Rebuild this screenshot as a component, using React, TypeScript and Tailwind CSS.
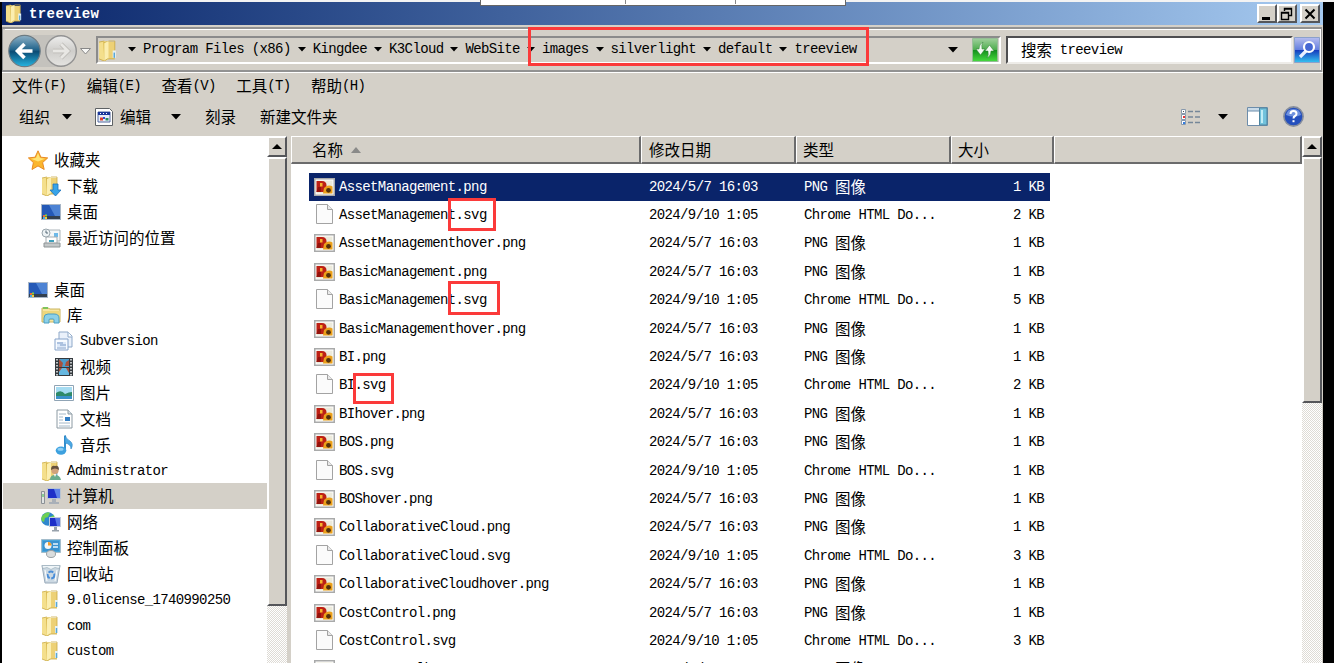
import type { ReactNode } from "react";

const places = [
  { icon: "star", label: "收藏夹", level: 0 },
  { icon: "download", label: "下载", level: 1 },
  { icon: "desktop", label: "桌面", level: 1 },
  { icon: "recent", label: "最近访问的位置", level: 1 },
  { icon: "", label: "", level: 0 },
  { icon: "desktop", label: "桌面", level: 0 },
  { icon: "library", label: "库", level: 1 },
  { icon: "subversion", label: "Subversion", level: 2 },
  { icon: "video", label: "视频", level: 2 },
  { icon: "picture", label: "图片", level: 2 },
  { icon: "document", label: "文档", level: 2 },
  { icon: "music", label: "音乐", level: 2 },
  { icon: "user", label: "Administrator", level: 1 },
  { icon: "computer", label: "计算机", level: 1, active: true },
  { icon: "network", label: "网络", level: 1 },
  { icon: "control", label: "控制面板", level: 1 },
  { icon: "recycle", label: "回收站", level: 1 },
  { icon: "folder", label: "9.0license_1740990250", level: 1 },
  { icon: "folder", label: "com", level: 1 },
  { icon: "folder", label: "custom", level: 1 },
];

const files = [
  { name: "AssetManagement.png", size: 1 },
  { name: "AssetManagement.svg", size: 2 },
  { name: "AssetManagementhover.png", size: 1 },
  { name: "BasicManagement.png", size: 1 },
  { name: "BasicManagement.svg", size: 5 },
  { name: "BasicManagementhover.png", size: 1 },
  { name: "BI.png", size: 1 },
  { name: "BI.svg", size: 2 },
  { name: "BIhover.png", size: 1 },
  { name: "BOS.png", size: 1 },
  { name: "BOS.svg", size: 1 },
  { name: "BOShover.png", size: 1 },
  { name: "CollaborativeCloud.png", size: 1 },
  { name: "CollaborativeCloud.svg", size: 3 },
  { name: "CollaborativeCloudhover.png", size: 1 },
  { name: "CostControl.png", size: 1 },
  { name: "CostControl.svg", size: 3 },
  { name: "CostControlhover.png", size: 1 },
];

const crumbs = [
  "Program Files (x86)",
  "Kingdee",
  "K3Cloud",
  "WebSite",
  "images",
  "silverlight",
  "default",
  "treeview",
];

const menus = ["文件(F)", "编辑(E)", "查看(V)", "工具(T)", "帮助(H)"];

const indents = ["pl-[26px]", "pl-[39px]", "pl-[52px]"];

// Latin glyphs are exactly half as wide as the CJK ones
function Txt({ children }: { children: string }) {
  const parts = children.split(/([\u4e00-\u9fff]+)/).filter(Boolean);
  return (
    <span className="flex items-center whitespace-pre">
      {parts.map((part, i) =>
        /[\u4e00-\u9fff]/.test(part) ? (
          <span
            key={i}
            className="-translate-y-px font-['Noto_Sans_CJK_SC',sans-serif] text-[15.5px] leading-[20px]"
          >
            {part}
          </span>
        ) : (
          <span
            key={i}
            className="font-['Liberation_Mono',monospace] text-[14px] leading-[20px] tracking-[-0.63px]"
          >
            {part}
          </span>
        ),
      )}
    </span>
  );
}

function Folder() {
  return (
    <>
      <path d="M1 2l5-1 3 1v17l-3 1-5-2z" fill="#f4df8c" />
      <path d="M5 2l5-1v17l-4 2z" fill="#d9b94f" />
      <path d="M8 2h8v16H9z" fill="#edd176" />
      <path d="M6 3l4-2v17l-4 2z" fill="#fbeeb0" />
      <path d="M1 2l5-1M10 1h6v9M16 18H9l-3 2-5-2" fill="none" stroke="#c9a945" strokeWidth=".8" />
      <path d="M14 10h3v7h-3z" fill="#e7f1f3" />
      <path d="M15.5 12v5" stroke="#58a7d5" strokeWidth="1.4" />
    </>
  );
}

const drawings: Record<string, ReactNode> = {
  folder: <Folder />,
  star: (
    <>
      <path d="M10 .8l2.9 6.4 6.8.7-5.1 4.7 1.6 6.9L10 15.9l-6 3.6 1.4-6.9L.4 7.9l6.7-.7z" fill="#fbb62d" stroke="#e88a24" />
      <path d="M10 3l2 5 5 .8-7 2.7-7-2.7 5-.8z" fill="#ffe475" />
    </>
  ),
  download: (
    <>
      <Folder />
      <path d="M12 8h5v6h3l-5.5 6L9 14h3z" fill="#38a4e8" stroke="#1c72bb" strokeWidth=".8" />
    </>
  ),
  desktop: (
    <>
      <path d="M0 2h20v16H0z" fill="#a8b6c6" />
      <path d="M1 3h18v11H1z" fill="#2459b7" />
      <path d="M8 3h11v11H14z" fill="#4d83d4" />
      <path d="M1 14h18v3H1z" fill="#33404f" />
      <path d="M2 13h2v2H2z" fill="#ed6b38" />
      <path d="M4 12.5h2v2H4z" fill="#8bce3b" />
      <path d="M2 15h2v2H2z" fill="#3fabe8" />
      <path d="M4 15h2v2H4z" fill="#f7cb39" />
    </>
  ),
  recent: (
    <>
      <path d="M7 2h12v11H7z" fill="#f4f7f8" stroke="#acb5ba" />
      <path d="M13 5h4v4h-4z" fill="#6db9e9" />
      <path d="M5 9h11v7H5z" fill="#fff" stroke="#a6adb1" />
      <path d="M8 12h5v2H8z" fill="#3fa0bc" />
      <path d="M3 15h16v4H3z" fill="#c3c7c8" stroke="#8d9496" />
      <circle cx="5" cy="5" r="4" fill="#edf2f4" stroke="#99a5ac" />
      <path d="M5 2.5V5h2" fill="none" stroke="#536774" />
    </>
  ),
  library: (
    <>
      <path d="M1 3h6l2 1h10v13H1z" fill="#f7e6a1" stroke="#cbb45e" />
      <path d="M2 2h5v2H2z" fill="#7fc45c" />
      <path d="M2 6h17v9H2z" fill="#edd77c" />
      <path d="M3 18v-5q0-4 4-4h6q5 0 5 4v5h-5v-3q0-1-1-1H9q-1 0-1 1v3z" fill="#8bd0e8" stroke="#4b9fc4" />
    </>
  ),
  subversion: (
    <>
      <path d="M5 1h9l4 4v11H5z" fill="#eaf1fb" stroke="#8fa9c9" />
      <path d="M14 1v5h4" fill="#fff" stroke="#8fa9c9" />
      <path d="M1 8h13v11H1z" fill="#f8fbff" stroke="#86a3ca" />
      <path d="M3 11h9v5H3z" fill="#dce8f8" />
      <path d="M3 12h6M6 14h6M3 17h9" stroke="#7d9bc7" />
    </>
  ),
  video: (
    <>
      <path d="M1 1h18v18H1z" fill="#34393d" />
      <path d="M5 2h10v8H5z" fill="#4d9bc9" />
      <path d="M5 11h10v7H5z" fill="#65b7e0" />
      <path d="M5 2l4 4-1 4H5zM15 3v6h-4l1-4zM5 11h3l-3 4zM15 11h-3l3 5z" fill="#a8503c" />
      <path d="M3 2v17M17 2v17" stroke="#e4e8ea" strokeWidth="1.6" strokeDasharray="1.6 1.4" />
    </>
  ),
  picture: (
    <>
      <path d="M.5 2.5h19v15H.5z" fill="#fff" stroke="#90a4b5" />
      <path d="M2 4h16v12H2z" fill="#a6dcf2" />
      <path d="M2 10q5-4 9 1 4-2 7-2v4H2z" fill="#2f8a69" />
      <path d="M2 13h16v3H2z" fill="#3a91c9" />
    </>
  ),
  document: (
    <>
      <path d="M3 1h11l4 4v14H3z" fill="#fff" stroke="#8c9aa3" />
      <path d="M14 1v4h4" fill="#d8e1e7" stroke="#8c9aa3" />
      <path d="M5 5h7M5 8h4M5 11h4M5 14h11M5 17h11" stroke="#a4b8c8" />
      <path d="M11 8h5v4h-5z" fill="#347fc4" />
    </>
  ),
  music: (
    <>
      <path d="M11 1v14" stroke="#338fce" strokeWidth="2" />
      <path d="M11 0q1 4 5 6 4 3 1 8 0-5-6-6z" fill="#4ba9e4" stroke="#2c83c2" strokeWidth=".6" />
      <ellipse cx="7" cy="15.6" rx="5.3" ry="4.2" fill="#3da1df" />
      <ellipse cx="6.5" cy="14.3" rx="3" ry="1.5" fill="#8fd0f4" />
    </>
  ),
  user: (
    <>
      <Folder />
      <path d="M9 19q0-5 5-5t6 5z" fill="#69ad8d" />
      <circle cx="14" cy="9.5" r="3.6" fill="#cfa27b" />
      <path d="M10 9q0-5 4-4 4-1 4 4-4-3-8 0z" fill="#65503e" />
      <path d="M12.5 13l1.5 3 1.5-3z" fill="#f4efe8" />
    </>
  ),
  computer: (
    <>
      <path d="M6 2h14v11H6z" fill="#b8c4d2" />
      <path d="M7 3h12v9H7z" fill="#1d2fc8" />
      <path d="M13 3h6v9h-3z" fill="#5d82e8" />
      <path d="M11 13h4v3h-4zM8 16h10v2H8z" fill="#a9b0b8" />
      <path d="M.5 5.5h3v12h-3z" fill="#e0e3e3" stroke="#8b9196" />
      <path d="M2 8v3" stroke="#37b944" />
    </>
  ),
  network: (
    <>
      <circle cx="7" cy="7" r="6.8" fill="#2f87cd" />
      <path d="M2 3q4-4 7-2l-2 4-3 1-1 4-2-1q-2-3 1-6zM9 5l4-2 1 4-4 2z" fill="#6dd052" />
      <path d="M8 5h12v10H8z" fill="#c1cbdb" />
      <path d="M9 6h10v8H9z" fill="#1d2fc8" />
      <path d="M14 6h5v8h-3z" fill="#5877e6" />
      <path d="M13 15h3v3h-3zM11 18h7v1.5h-7z" fill="#98a2ac" />
    </>
  ),
  control: (
    <>
      <path d="M.5 1.5h19v13H.5z" fill="#4ba6da" stroke="#a3bccb" />
      <path d="M2 3h16v10H2z" fill="#3b93cf" />
      <circle cx="7" cy="7.5" r="3.5" fill="#f5f7f7" />
      <path d="M7 7.5V4a3.5 3.5 0 013.5 3.5z" fill="#f49b29" />
      <path d="M12 6h5M12 9h5" stroke="#e7f6ff" strokeWidth="1.5" />
      <ellipse cx="10" cy="16" rx="4.5" ry="3.5" fill="#dadddd" stroke="#9aa1a5" />
    </>
  ),
  recycle: (
    <>
      <path d="M1 1.5h18L16 19H4z" fill="#cbd8e2" stroke="#9aabba" />
      <path d="M1 1.5h18l-1 3-4-1-4 2-4-2-4 1z" fill="#eff5f8" stroke="#9fb1bd" strokeWidth=".7" />
      <circle cx="10" cy="11" r="3.4" fill="none" stroke="#4a8ed9" strokeWidth="2" strokeDasharray="5 1.5" />
      <path d="M4 6l2 11M16 6l-2 11" stroke="#fff" />
    </>
  ),
};

function Icon({ name, className = "h-5 w-5" }: { name: string; className?: string }) {
  return (
    <svg viewBox="0 0 20 20" className={`${className} shrink-0`} aria-hidden="true">
      {drawings[name]}
    </svg>
  );
}

function FileIcon({ png }: { png: boolean }) {
  if (!png) {
    return (
      <svg width="21" height="22" viewBox="0 0 21 22" className="-translate-y-px" aria-hidden="true">
        <path d="M2.5 1.5h11l5 5v14h-16z" fill="#fbfbfb" stroke="#a3a3a3" />
        <path d="M13.5 1.5v5h5" fill="#e9e9e9" stroke="#a3a3a3" />
      </svg>
    );
  }
  return (
    <svg width="21" height="18" viewBox="0 0 21 18" aria-hidden="true">
      <path d="M.75.75h19.5v16.5H.75z" fill="#fff" stroke="#a9aaaa" strokeWidth="1.5" />
      <path d="M2.5 2.5h16v13h-16z" fill="#eceadb" />
      <path d="M2.5 3H8q4.5 0 4.5 4.5T10 14H2.5z" fill="#bd2015" />
      <path d="M4 9h3v5H2.5z" fill="#94130d" />
      <path d="M6 5h2.5v3.5H6z" fill="#f6b32a" />
      <path d="M10 10q4-4 8.5-1.5v7H9z" fill="#eba01b" />
      <circle cx="14.5" cy="12.3" r="2.4" fill="#54310c" />
    </svg>
  );
}

function Down({ className = "" }: { className?: string }) {
  return (
    <svg width="10" height="6" viewBox="0 0 10 6" className={`shrink-0 ${className}`} aria-hidden="true">
      <path d="M0 0h10L5 5.5z" />
    </svg>
  );
}

function ScrollBar({ thumb }: { thumb: string }) {
  return (
    <div className="flex w-5 shrink-0 flex-col bg-[conic-gradient(#fff_25%,#dedbd5_0_50%,#fff_0_75%,#dedbd5_0)] bg-[length:2px_2px]">
      <div className="flex h-[21px] items-center justify-center border-2 border-t-white border-r-[#55565a] border-b-[#55565a] border-l-white bg-[#d4d0c8]">
        <svg width="10" height="5" viewBox="0 0 10 5" aria-hidden="true">
          <path d="M0 5h10L5 0z" />
        </svg>
      </div>
      <div
        className={`${thumb} border-2 border-t-white border-r-[#55565a] border-b-[#55565a] border-l-white bg-[#d4d0c8]`}
      />
    </div>
  );
}

function TitleBar() {
  const button =
    "flex h-[19px] w-5 items-center justify-center border-2 border-t-white border-r-[#55565a] border-b-[#55565a] border-l-white bg-[#d4d0c8]";
  return (
    <div className="flex h-[23px] shrink-0 items-center bg-linear-to-r from-[#0a246a] to-[#a6caf0] pr-[3px] pl-[3px] text-white">
      <Icon name="folder" className="h-[19px] w-[19px]" />
      <div className="ml-[5px] font-['Liberation_Mono',monospace] text-[14px] leading-[20px] font-bold tracking-[0.4px]">
        treeview
      </div>
      <div className="ml-auto flex">
        <div className={button}>
          <svg width="16" height="14" viewBox="0 0 16 14">
            <path d="M3 10h8v3H3z" />
          </svg>
        </div>
        <div className={button}>
          <svg width="16" height="14" viewBox="0 0 16 14" fill="none" stroke="#000">
            <path d="M5.5 4V1.5h7v7H10M5 2h8M2.5 5.5h7v7h-7zM2 6h8" strokeWidth="1.4" />
          </svg>
        </div>
        <div className={`${button} ml-[3px]`}>
          <svg width="14" height="14" viewBox="0 0 14 14" stroke="#000" strokeWidth="2">
            <path d="M2.5 2.5l9 9M11.5 2.5l-9 9" />
          </svg>
        </div>
      </div>
    </div>
  );
}

function NavButtons() {
  return (
    <svg width="88" height="38" viewBox="0 0 88 38" className="shrink-0" aria-hidden="true">
      <defs>
        <linearGradient id="back" x2="0" y2="1">
          <stop stopColor="#90b2c7" />
          <stop offset=".45" stopColor="#24668d" />
          <stop offset=".52" stopColor="#0b4b74" />
          <stop offset="1" stopColor="#26b6e2" />
        </linearGradient>
        <linearGradient id="forward" x2="0" y2="1">
          <stop stopColor="#eeeeed" />
          <stop offset=".5" stopColor="#cecdca" />
          <stop offset="1" stopColor="#e5e4e1" />
        </linearGradient>
      </defs>
      <path d="M21 2h36q-12 15 0 32H21q12-17 0-32z" fill="#c4c2bd" />
      <circle cx="19.5" cy="18" r="15.7" fill="url(#back)" stroke="#6d7b83" strokeWidth="1.2" />
      <circle cx="56" cy="18" r="15.3" fill="url(#forward)" stroke="#929292" strokeWidth="1.4" />
      <path d="M27.5 18h-13M19.5 11l-7 7 7 7" fill="none" stroke="#fff" strokeWidth="3.6" />
      <path d="M48 18h13M56 11l7 7-7 7" fill="none" stroke="#bbb9b5" strokeWidth="4.4" />
      <path d="M48 18h13M56 11l7 7-7 7" fill="none" stroke="#e8e7e4" strokeWidth="2.8" />
      <path d="M75.5 15.5h10l-5 5.5z" fill="#f7f7f5" stroke="#888" />
    </svg>
  );
}

function AddressBar() {
  return (
    <div className="mr-px flex h-[45px] shrink-0 border-t-2 border-r-2 border-b-2 border-l border-[#929292] pl-[2px]">
      <div className="flex grow items-center border-t border-r border-white">
        <div className="mt-[3px] flex">
          <NavButtons />
        </div>
        <div className="ml-[3px] flex h-7 w-[905px] items-center border-2 border-t-[#8b8b8b] border-r-white border-b-white border-l-[#8b8b8b]">
          <Icon name="folder" className="h-[21px] w-[21px]" />
          <div className="ml-[2px] flex -translate-y-px items-center">
            {crumbs.map((crumb) => (
              <div key={crumb} className="flex items-center">
                <span className="flex w-[22px] justify-center pt-px">
                  <svg width="8" height="5" viewBox="0 0 8 5">
                    <path d="M0 0h8L4 4.5z" />
                  </svg>
                </span>
                <Txt>{crumb}</Txt>
              </div>
            ))}
          </div>
          <Down className="mr-[14px] ml-auto" />
          <svg width="27" height="24" viewBox="0 0 27 24" className="shrink-0">
            <defs>
              <linearGradient id="refresh" x2="0" y2="1">
                <stop stopColor="#9fd09b" />
                <stop offset=".48" stopColor="#4fae4f" />
                <stop offset=".5" stopColor="#128d1c" />
                <stop offset="1" stopColor="#48dc3e" />
              </linearGradient>
            </defs>
            <path d="M.5.5h25v23H.5z" fill="url(#refresh)" stroke="#96bd96" />
            <path
              d="M11 4q-2 3-1 7h3l-4.500 6L4 11h3q0-5 4-7zM15 20q2-3 1-7h-3l4.500-6L22 13h-3q0 5-4 7z"
              fill="#f4fbf3"
              stroke="#2d7f30"
              strokeWidth=".5"
            />
          </svg>
        </div>
        <div className="ml-[5px] flex h-7 w-[287px] items-center border-2 border-t-[#4e4e50] border-r-[#eeece8] border-b-[#eeece8] border-l-[#4e4e50] bg-white pl-[13px]">
          <Txt>搜索 treeview</Txt>
        </div>
        <svg width="26" height="26" viewBox="0 0 26 26" className="ml-px shrink-0">
          <defs>
            <linearGradient id="find" x2="0" y2="1">
              <stop stopColor="#b6bdf0" />
              <stop offset=".48" stopColor="#6681e0" />
              <stop offset=".5" stopColor="#1538bc" />
              <stop offset="1" stopColor="#36c3f1" />
            </linearGradient>
          </defs>
          <path d="M.5.5h25v25H.5z" fill="url(#find)" stroke="#8ba0cb" />
          <path d="M12 14l-6 6" stroke="#e9efff" strokeWidth="3.2" />
          <circle cx="15" cy="10" r="5" fill="#4568d3" stroke="#fff" strokeWidth="2.2" />
        </svg>
      </div>
    </div>
  );
}

function ToolBar() {
  return (
    <div className="flex h-[35px] shrink-0 items-center pr-[19px] pl-[17px]">
      <Txt>组织</Txt>
      <Down className="ml-[12px]" />
      <svg width="18" height="18" viewBox="0 0 18 18" className="ml-[23px]">
        <path d="M.5.5h14l3 3v14H.5z" fill="#fff" stroke="#5d6164" />
        <path d="M3 4h12v10H3z" fill="#e8edf8" stroke="#52699e" />
        <path d="M3 4h12v3H3z" fill="#1b379b" />
        <path d="M5 5.5h1M8 5.500h1M11 5.500h1" stroke="#fff" />
        <path d="M5 9.500h3v3H5z" fill="#df3d2c" />
        <path d="M8 9h2v2H8z" fill="#334ad0" />
        <path d="M10.500 10h3v2.500h-3z" fill="#2b8b64" />
      </svg>
      <div className="ml-[7px]">
        <Txt>编辑</Txt>
      </div>
      <Down className="ml-[20px]" />
      <div className="ml-[24px]">
        <Txt>刻录</Txt>
      </div>
      <div className="ml-[24px]">
        <Txt>新建文件夹</Txt>
      </div>
      <svg width="20" height="18" viewBox="0 0 20 18" className="ml-auto">
        <path d="M.5 1.5h4v4h-4zM.5 6.5h4v5h-4zM.5 12.5h4v4h-4z" fill="#fff" stroke="#8799ad" />
        <path d="M2 3h1v1H2z" fill="#555" />
        <path d="M2 8h2v2H2z" fill="#ed3333" />
        <path d="M2 14h2v2H2z" fill="#347de0" />
        <path d="M7 3.5h5M14 3.5h5M7 9h5M14 9h5M7 14.5h5M14 14.5h5" stroke="#758799" strokeWidth="1.4" />
      </svg>
      <Down className="ml-[17px]" />
      <svg width="21" height="19" viewBox="0 0 21 19" className="ml-[19px]">
        <path d="M.5.5h20v18H.5z" fill="#fff" stroke="#6d8dab" />
        <path d="M1 1h19v3H1z" fill="#cadbe9" />
        <path d="M1 4h19" stroke="#6d8dab" />
        <path d="M12.5 1h7.5v17h-7.5z" fill="#72c2dc" stroke="#4f859f" />
        <path d="M14 3h2v13h-2z" fill="#c1edf6" />
      </svg>
      <svg width="21" height="21" viewBox="0 0 21 21" className="ml-[15px]">
        <circle cx="10.5" cy="10.5" r="9.6" fill="#244fbd" stroke="#858d9d" strokeWidth="1.6" />
        <path d="M3 9q1-6 7.5-6T18 9q-7 3-15 0z" fill="#6f91de" />
        <path d="M7.5 8q0-3 3-3t3 2.7q0 1.5-1.5 2.3-1.5.8-1.5 2.4" fill="none" stroke="#fff" strokeWidth="2" />
        <path d="M9.5 14.2h2v2h-2z" fill="#fff" />
      </svg>
    </div>
  );
}

function Sidebar() {
  return (
    <div className="w-[265px] shrink-0 overflow-hidden bg-white pt-[11.5px]">
      {places.map((place, i) => (
        <div
          key={i}
          className={`ml-px flex h-[25.85px] items-center ${indents[place.level]} ${place.active ? "bg-[#d4d0c8]" : ""}`}
        >
          <div className="-ml-px flex items-center gap-[6px]">
            {place.icon && <Icon name={place.icon} />}
            <Txt>{place.label}</Txt>
          </div>
        </div>
      ))}
    </div>
  );
}

function FileList() {
  const head =
    "flex h-full items-center border-t border-r-2 border-b-2 border-l border-t-white border-r-[#6b6b6c] border-b-[#6b6b6c] border-l-white bg-[#d4d0c8] pt-px";
  return (
    <div className="flex w-[1011px] shrink-0 flex-col overflow-hidden bg-white">
      <div className="flex h-[28px] shrink-0">
        <div className={`${head} w-[350px] pl-[20px]`}>
          <Txt>名称</Txt>
          <svg width="10" height="6" viewBox="0 0 10 6" className="ml-[8px]">
            <path d="M0 6h10L5 0z" fill="#8a8a89" />
          </svg>
        </div>
        <div className={`${head} w-[155px] pl-[7px]`}>
          <Txt>修改日期</Txt>
        </div>
        <div className={`${head} w-[155px] pl-[6px]`}>
          <Txt>类型</Txt>
        </div>
        <div className={`${head} w-[103px] pl-[6px]`}>
          <Txt>大小</Txt>
        </div>
        <div className={`${head} grow`} />
      </div>
      <div className="mt-[8.5px] ml-[18px] w-[741px]">
        {files.map((file, i) => {
          const png = file.name.endsWith("png");
          return (
            <div
              key={file.name}
              className={`flex h-[28.4px] items-center ${i === 0 ? "bg-[#0a246a] text-white" : ""}`}
            >
              <div className="flex w-[340px] items-center gap-[4px] pl-[5px]">
                <FileIcon png={png} />
                <Txt>{file.name}</Txt>
              </div>
              <div className="w-[155px]">
                <Txt>{png ? "2024/5/7 16:03" : "2024/9/10 1:05"}</Txt>
              </div>
              <div className="w-[155px]">
                <Txt>{png ? "PNG 图像" : "Chrome HTML Do..."}</Txt>
              </div>
              <div className="flex w-[85px] justify-end">
                <Txt>{`${file.size} KB`}</Txt>
              </div>
            </div>
          );
        })}
      </div>
    </div>
  );
}

export default function App() {
  return (
    <div className="relative flex h-[663px] w-[1334px] flex-col overflow-hidden bg-black text-black">
      <div className="h-[2px] shrink-0 bg-[#f3f3f3]" />
      <div className="ml-[2px] flex h-[661px] w-[1321px] flex-col bg-[#d4d0c8]">
        <TitleBar />
        <div className="h-[2px] shrink-0" />
        <AddressBar />
        <div className="h-px shrink-0 bg-white" />
        <div className="flex h-[25px] shrink-0 items-center gap-[20.4px] pl-[10px]">
          {menus.map((menu) => (
            <Txt key={menu}>{menu}</Txt>
          ))}
        </div>
        <div className="h-px shrink-0" />
        <ToolBar />
        <div className="h-[2px] shrink-0" />
        <div className="flex min-h-0 grow">
          <Sidebar />
          <ScrollBar thumb="h-[449px]" />
          <div className="w-[4px] shrink-0" />
          <FileList />
          <ScrollBar thumb="h-[246px]" />
        </div>
      </div>

      {/* edge of the remote session toolbar */}
      <div className="absolute top-0 left-[480px] flex h-[6px] w-[366px] border border-t-0 border-[#666] bg-white">
        <div className="h-1 w-[145px] border-r border-[#888]" />
        <div className="h-1 w-[110px] border-r border-[#888]" />
      </div>

      <div className="absolute top-[27px] left-[528px] h-[39px] w-[341px] border-3 border-[#fb3a3a]" />
      <div className="absolute top-[198px] left-[448px] h-[33px] w-[48px] border-3 border-[#fb3a3a]" />
      <div className="absolute top-[281px] left-[448px] h-[34px] w-[52px] border-3 border-[#fb3a3a]" />
      <div className="absolute top-[373px] left-[353px] h-[31px] w-[41px] border-3 border-[#fb3a3a]" />
    </div>
  );
}
